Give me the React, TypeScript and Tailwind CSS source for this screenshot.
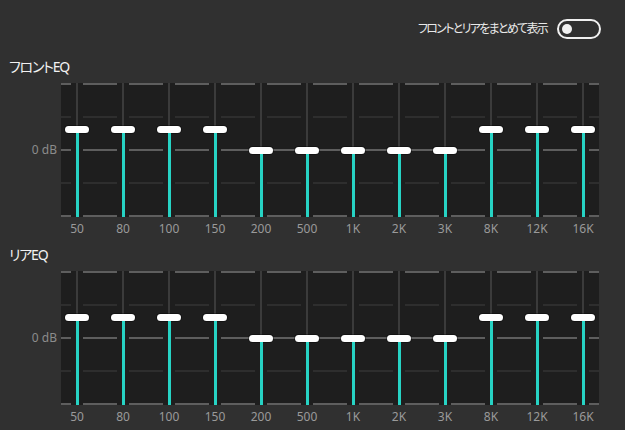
import React from "react";

const freqs = ["50", "80", "100", "150", "200", "500", "1K", "2K", "3K", "8K", "12K", "16K"];
const raised = [true, true, true, true, false, false, false, false, false, true, true, true];

const GridLines = () => (
  <svg width="538" height="134" className="col-start-1 row-start-1 block">
    {[1, 34, 67, 100, 133].map((y, i) => (
      <line
        key={y}
        x1="0"
        x2="538"
        y1={y}
        y2={y}
        stroke={i % 2 === 0 ? "#5e5e5e" : "#2e2e2e"}
        strokeWidth="2"
        strokeDasharray="34 12"
        strokeDashoffset="24"
      />
    ))}
  </svg>
);

const Slider = ({ up }: { up: boolean }) => (
  <div className="flex h-full w-[32px] flex-col items-center">
    <div className={`w-[2px] bg-[#3b3b3b] ${up ? "h-[43px]" : "h-[64px]"}`} />
    <div className="h-[7px] w-[24px] shrink-0 rounded-full bg-white shadow-[0_0_0_1px_rgba(0,0,0,0.35)]" />
    <div className="w-[3px] flex-1 bg-[#27d3c4]" />
  </div>
);

const EqBlock = ({ title, className = "" }: { title: string; className?: string }) => (
  <div className={className}>
    <div className="h-[20px] pl-[9px] text-[14px] leading-[20px] text-[#f2f2f2] [font-feature-settings:'palt'] tracking-[-1.2px]">
      {title}
    </div>
    <div className="mt-[6px] flex">
      <div className="flex h-[134px] w-[61px] items-center justify-end pr-[4px] text-[12px] text-[#8c8c8c]">
        0 dB
      </div>
      <div className="grid h-[134px] w-[538px] bg-[#1e1e1e]">
        <GridLines />
        <div className="col-start-1 row-start-1 flex h-[134px] justify-between">
          {raised.map((up, i) => (
            <Slider key={i} up={up} />
          ))}
        </div>
      </div>
    </div>
    <div className="ml-[61px] mt-[4px] flex w-[538px] justify-between">
      {freqs.map((f) => (
        <div key={f} className="w-[32px] text-center text-[12px] leading-[16px] text-[#9a9a9a]">
          {f}
        </div>
      ))}
    </div>
  </div>
);

export default function App() {
  return (
    <div className="h-[430px] w-[625px] overflow-hidden bg-[#303030] font-['Noto_Sans','Noto_Sans_CJK_JP',sans-serif]">
      <div className="flex h-[20px] mt-[19px] items-center justify-end gap-[10px] pr-[24px]">
        <span className="text-[12px] text-[#e8e8e8] [font-feature-settings:'palt'] tracking-[-1.7px]">
          フロントとリアをまとめて表示
        </span>
        <div className="flex h-[20px] w-[44px] items-center rounded-full border-2 border-[#f0f0f0] px-[3px]">
          <div className="h-[10px] w-[10px] rounded-full bg-[#f0f0f0]" />
        </div>
      </div>
      <EqBlock title="フロントEQ" className="mt-[18px]" />
      <EqBlock title="リアEQ" className="mt-[8px]" />
    </div>
  );
}
